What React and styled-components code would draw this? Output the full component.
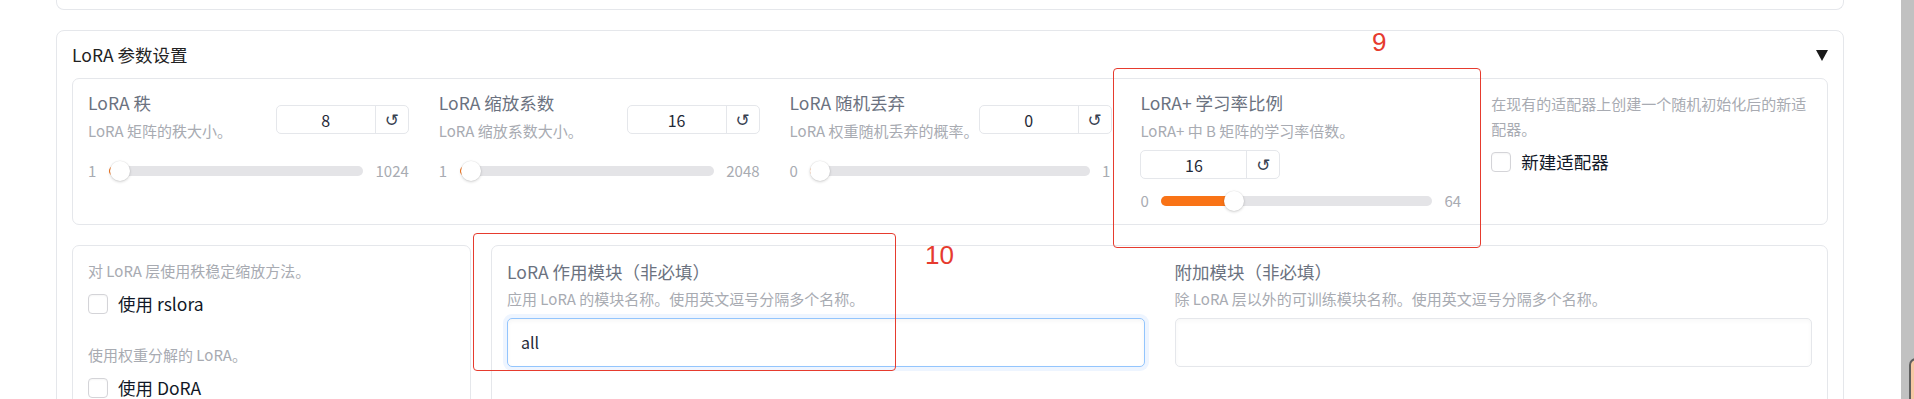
import React from 'react';
import styled, { createGlobalStyle } from 'styled-components';

const Global = createGlobalStyle`
  html, body { margin: 0; padding: 0; background: #fff; }
  body { font-family: "Noto Sans CJK SC", "Noto Sans", sans-serif; overflow: hidden; }
  * { box-sizing: border-box; }
`;

const Page = styled.div`
  position: relative;
  display: flex;
  width: 1914px;
  height: 399px;
  overflow: hidden;
  background: #fff;
`;

const Main = styled.main`
  flex: 1;
  min-width: 0;
  padding: 0 57px 0 56px;
  display: flex;
  flex-direction: column;
  gap: 20px;
`;

const ScrollStrip = styled.div`
  position: relative;
  flex: none;
  width: 13px;
  height: 100%;
  background: #c1c1c1;
`;

const EdgeWidget = styled.div`
  position: absolute;
  left: 8px;
  top: 358px;
  width: 24px;
  height: 60px;
  border: 2px solid #5f5f5f;
  border-radius: 7px;
  background: #f6c8a4;
`;

const PrevPanel = styled.section`
  height: 10px;
  border: 1px solid #e5e7eb;
  border-top: none;
  border-radius: 0 0 8px 8px;
  flex: none;
`;

const Panel = styled.section`
  border: 1px solid #e5e7eb;
  border-radius: 8px;
  padding: 12px 15px 0;
  flex: none;
`;

const PanelHeader = styled.div`
  display: flex;
  align-items: center;
  justify-content: space-between;
  height: 24px;
  margin-bottom: 10.5px;
`;

const PanelTitle = styled.span`
  font-size: 17.5px;
  line-height: 24px;
  color: #222;
`;

const FormRow = styled.div`
  display: grid;
  grid-template-columns: repeat(5, 1fr);
  border: 1px solid #e5e7eb;
  border-radius: 7px;
`;

const LowerRow = styled.div`
  display: flex;
  gap: 20px;
  margin-top: 20px;
`;

const SideBox = styled.div`
  flex: 0 0 399px;
  display: flex;
  flex-direction: column;
  gap: 1px;
  border: 1px solid #e5e7eb;
  border-radius: 7px;
`;

const ModuleBox = styled.div`
  flex: 1;
  display: grid;
  grid-template-columns: 1fr 1fr;
  border: 1px solid #e5e7eb;
  border-radius: 7px;
`;

const Block = styled.div`
  padding: ${p => (p.$top ? `${p.$top}px` : '12.5px')} 15px 12.5px;
  min-width: 0;
`;

const Head = styled.div`
  display: flex;
  flex-direction: ${p => (p.$stacked ? 'column' : 'row')};
  justify-content: space-between;
  align-items: flex-start;
`;

const Texts = styled.div`
  display: flex;
  flex-direction: column;
  flex: none;
  white-space: nowrap;
`;

const Label = styled.span`
  font-size: 17.5px;
  line-height: 24.5px;
  color: #6b7280;
  margin-bottom: 4px;
`;

const Info = styled.span`
  font-size: 15px;
  line-height: ${p => (p.$tall ? '24.4px' : '21px')};
  color: #a8abb2;
`;

const NumberBox = styled.div`
  display: flex;
  flex: none;
  width: ${p => (p.$wide ? '140px' : '133px')};
  height: 29px;
  margin-top: ${p => (p.$wide ? '9.5px' : '14px')};
  margin-left: auto;
  border: 1px solid #e5e7eb;
  border-radius: 5px;
  background: #fff;
  ${p => (p.$wide ? 'margin-left: 0;' : '')}
`;

const NumValue = styled.span`
  flex: 1;
  display: flex;
  align-items: center;
  justify-content: center;
  font-size: 16px;
  color: #1f2937;
`;

const ResetBtn = styled.span`
  flex: none;
  width: 33px;
  display: flex;
  align-items: center;
  justify-content: center;
  border-left: 1px solid #e5e7eb;
  font-family: "DejaVu Sans", sans-serif;
  font-size: 17px;
  color: #374151;
`;

const SliderRow = styled.div`
  display: flex;
  align-items: center;
  gap: 12.5px;
  height: 20px;
  margin-top: ${p => (p.$stacked ? '12.4px' : '20.5px')};
`;

const RangeText = styled.span`
  font-size: 15px;
  line-height: 20px;
  color: #a8abb2;
  flex: none;
`;

const Track = styled.div`
  position: relative;
  flex: 1;
  height: 10px;
  border-radius: 5px;
  background: #e4e4e7;
`;

const Fill = styled.div`
  position: absolute;
  left: 0;
  top: 0;
  height: 100%;
  border-radius: 5px;
  background: #f97316;
`;

const Thumb = styled.div`
  position: absolute;
  top: 50%;
  width: 20px;
  height: 20px;
  margin-top: -10px;
  border-radius: 50%;
  background: #fff;
  box-shadow: 0 1px 3px rgba(0, 0, 0, 0.18), 0 0 0 0.5px rgba(0, 0, 0, 0.05);
`;

const CheckRow = styled.div`
  display: flex;
  align-items: center;
  gap: 10px;
  min-height: 24.5px;
  margin-top: 8px;
`;

const CheckBox = styled.span`
  flex: none;
  width: 20px;
  height: 20px;
  border: 1px solid #d4d4d8;
  border-radius: 4px;
  background: #fff;
  box-shadow: inset 0 1px 2px rgba(0, 0, 0, 0.04);
`;

const CheckLabel = styled.span`
  font-size: 17.5px;
  line-height: 24.5px;
  color: #111827;
`;

const TextInput = styled.div`
  height: 49px;
  margin-top: 8.5px;
  display: flex;
  align-items: center;
  padding: 0 13px;
  border: 1px solid ${p => (p.$focused ? '#93c5fd' : '#e5e7eb')};
  border-radius: 5px;
  font-size: 16px;
  color: #1f2937;
  background: #fff;
  box-shadow: ${p =>
    p.$focused
      ? '0 0 0 4px #eef5ff, inset 0 2px 4px rgba(0,0,0,0.04)'
      : 'inset 0 2px 4px rgba(0,0,0,0.03)'};
`;

const Annot = styled.div`
  position: absolute;
  border: 1.5px solid #e63b2e;
  border-radius: 4px;
  pointer-events: none;
`;

const AnnotNum = styled.span`
  position: absolute;
  font-family: "Liberation Sans", Arial, sans-serif;
  font-size: 26px;
  line-height: 26px;
  color: #e63b2e;
`;

function SliderBlock({ label, info, value, min, max, stacked }) {
  const frac = (value - min) / (max - min);
  return (
    <Block>
      <Head $stacked={stacked}>
        <Texts>
          <Label>{label}</Label>
          <Info>{info}</Info>
        </Texts>
        <NumberBox $wide={stacked}>
          <NumValue>{value}</NumValue>
          <ResetBtn>↺</ResetBtn>
        </NumberBox>
      </Head>
      <SliderRow $stacked={stacked}>
        <RangeText>{min}</RangeText>
        <Track>
          <Fill style={{ width: `calc(10px + ${frac} * (100% - 20px))` }} />
          <Thumb style={{ left: `calc(${frac} * (100% - 20px))` }} />
        </Track>
        <RangeText>{max}</RangeText>
      </SliderRow>
    </Block>
  );
}

function CheckBlock({ info, label }) {
  return (
    <Block>
      <Info $tall>{info}</Info>
      <CheckRow>
        <CheckBox />
        <CheckLabel>{label}</CheckLabel>
      </CheckRow>
    </Block>
  );
}

function TextBlock({ label, info, value, focused }) {
  return (
    <Block $top={14}>
      <Texts>
        <Label>{label}</Label>
        <Info>{info}</Info>
      </Texts>
      <TextInput $focused={focused}>{value}</TextInput>
    </Block>
  );
}

export default function App() {
  return (
    <>
      <Global />
      <Page>
        <Main>
          <PrevPanel />
          <Panel>
            <PanelHeader>
              <PanelTitle>LoRA 参数设置</PanelTitle>
              <svg width="12" height="11" viewBox="0 0 12 11">
                <polygon points="0,0 12,0 6,11" fill="#1a1a1a" />
              </svg>
            </PanelHeader>
            <FormRow>
              <SliderBlock label="LoRA 秩" info="LoRA 矩阵的秩大小。" value={8} min={1} max={1024} />
              <SliderBlock label="LoRA 缩放系数" info="LoRA 缩放系数大小。" value={16} min={1} max={2048} />
              <SliderBlock label="LoRA 随机丢弃" info="LoRA 权重随机丢弃的概率。" value={0} min={0} max={1} />
              <SliderBlock label="LoRA+ 学习率比例" info="LoRA+ 中 B 矩阵的学习率倍数。" value={16} min={0} max={64} stacked />
              <CheckBlock info="在现有的适配器上创建一个随机初始化后的新适配器。" label="新建适配器" />
            </FormRow>
            <LowerRow>
              <SideBox>
                <CheckBlock info="对 LoRA 层使用秩稳定缩放方法。" label="使用 rslora" />
                <CheckBlock info="使用权重分解的 LoRA。" label="使用 DoRA" />
              </SideBox>
              <ModuleBox>
                <TextBlock
                  label="LoRA 作用模块（非必填）"
                  info="应用 LoRA 的模块名称。使用英文逗号分隔多个名称。"
                  value="all"
                  focused
                />
                <TextBlock
                  label="附加模块（非必填）"
                  info="除 LoRA 层以外的可训练模块名称。使用英文逗号分隔多个名称。"
                  value=""
                />
              </ModuleBox>
            </LowerRow>
          </Panel>
        </Main>
        <ScrollStrip>
          <EdgeWidget />
        </ScrollStrip>
        <Annot style={{ left: 1113, top: 68, width: 368, height: 180 }} />
        <AnnotNum style={{ left: 1372, top: 28.5 }}>9</AnnotNum>
        <Annot style={{ left: 473, top: 233, width: 423, height: 138 }} />
        <AnnotNum style={{ left: 925, top: 241.5 }}>10</AnnotNum>
      </Page>
    </>
  );
}
